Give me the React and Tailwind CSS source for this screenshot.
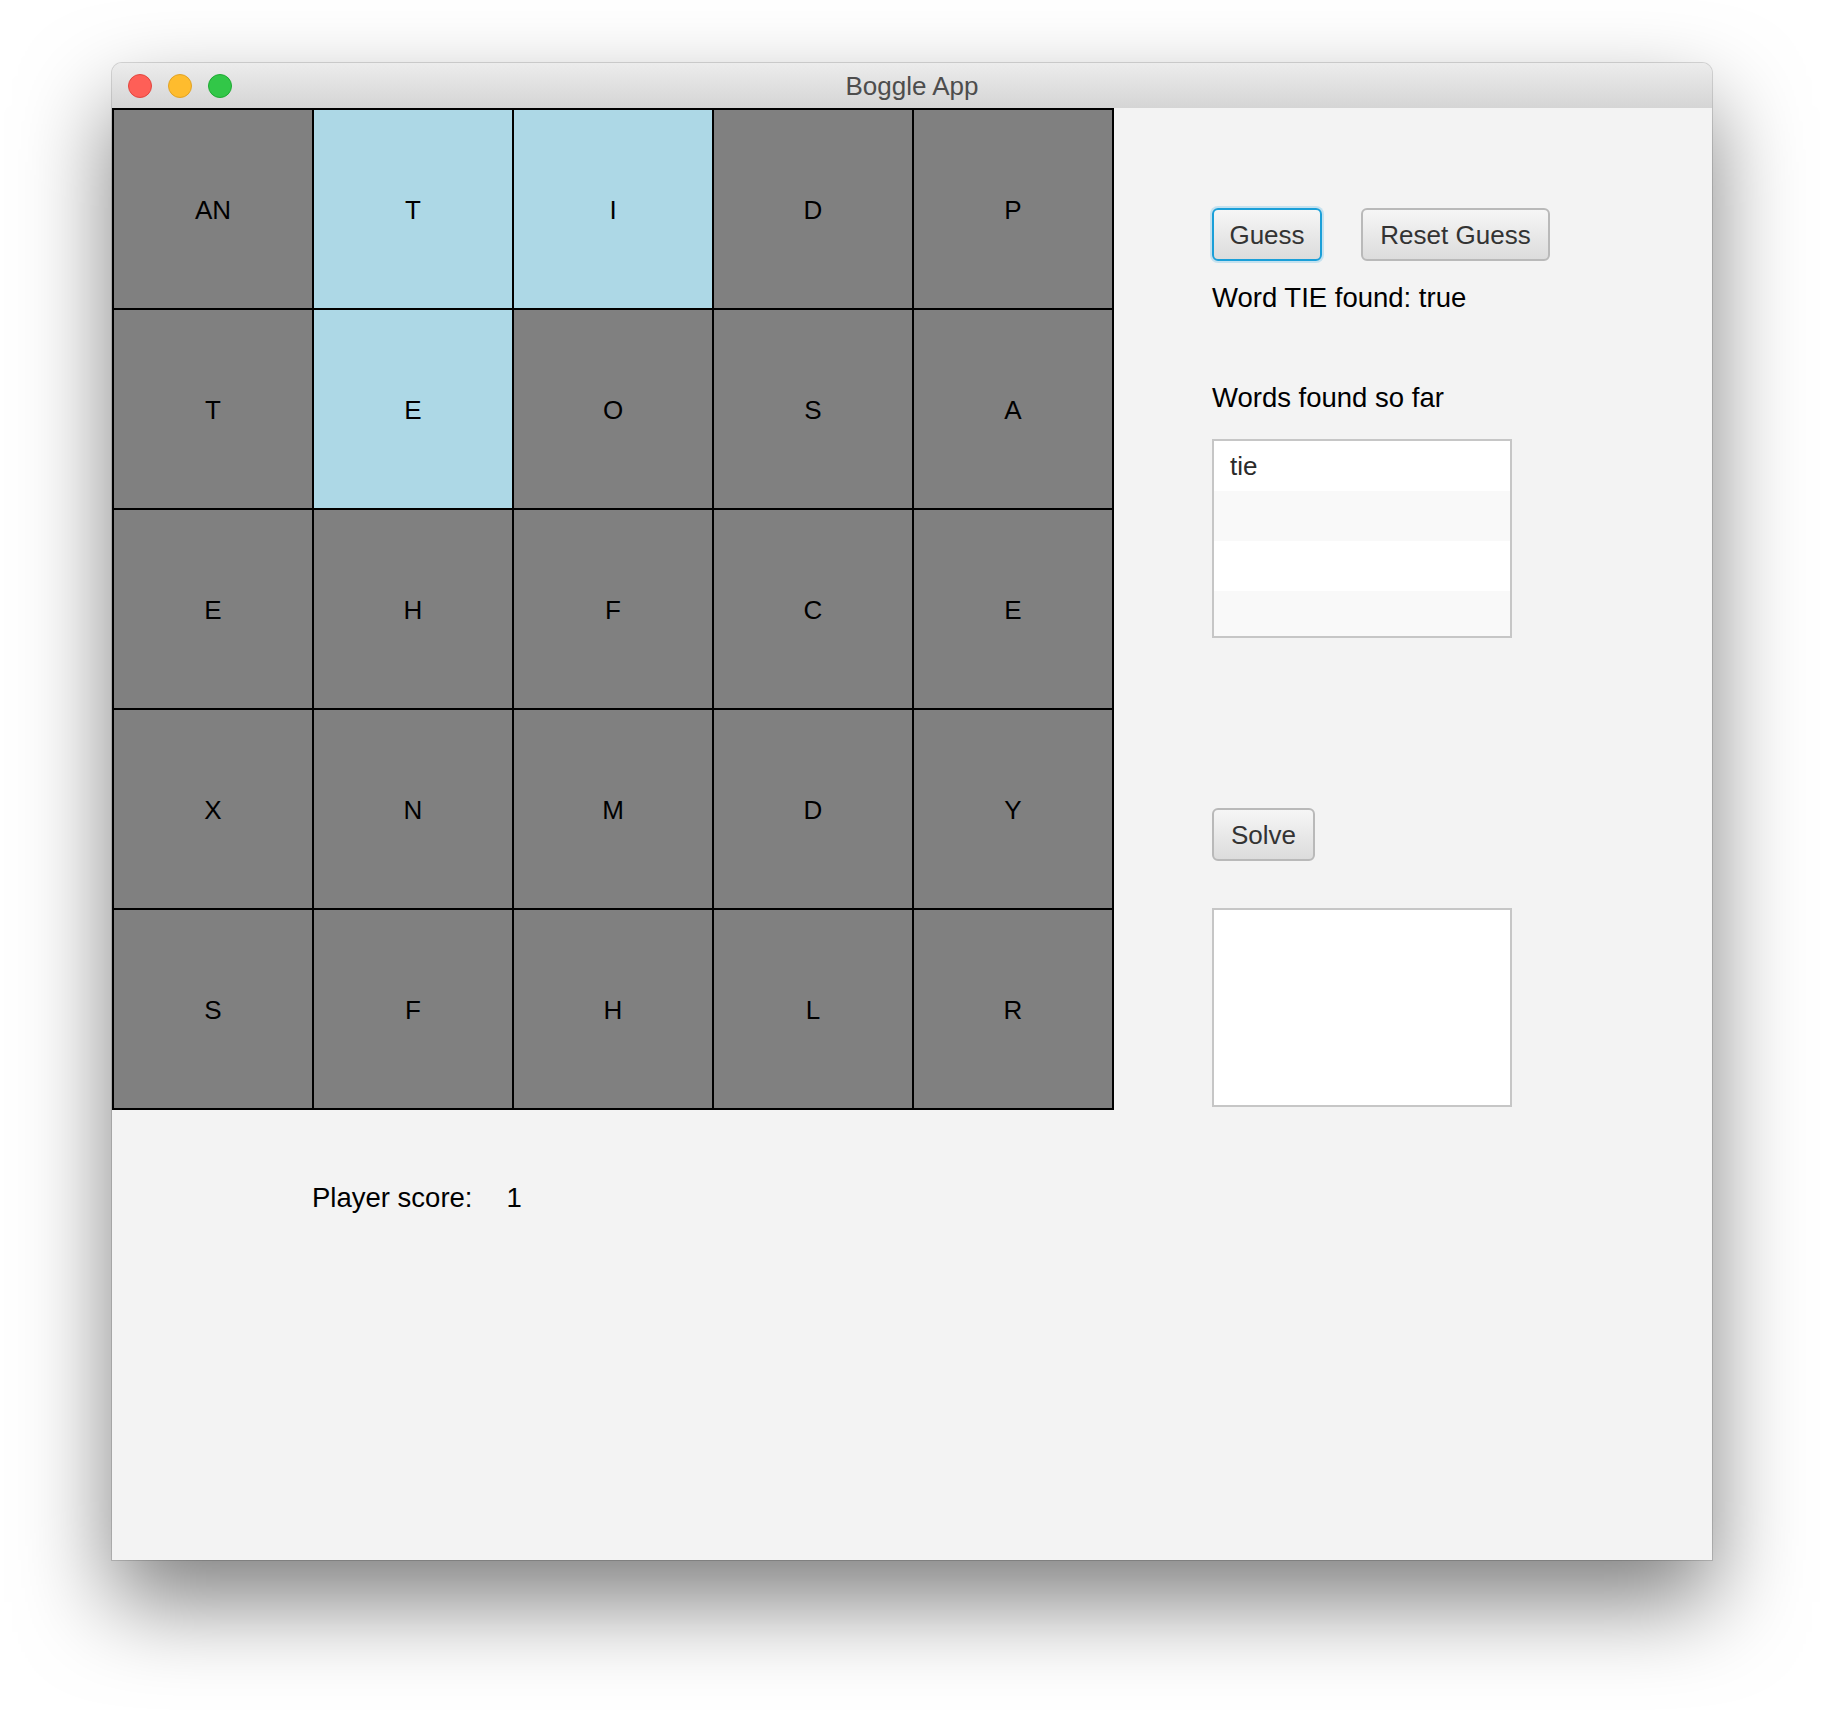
// Boggle App window: 5x5 letter board, guess controls and word lists.

const BOARD = [
  ["AN", "T", "I", "D", "P"],
  ["T", "E", "O", "S", "A"],
  ["E", "H", "F", "C", "E"],
  ["X", "N", "M", "D", "Y"],
  ["S", "F", "H", "L", "R"],
];

// cells that make up the current guess (TIE)
const SELECTED = ["0-1", "0-2", "1-1"];

const FOUND = ["tie"];

function TrafficLights() {
  return (
    <div className="flex items-center gap-[16px] pl-[16px]">
      <span className="h-[24px] w-[24px] rounded-full border border-[#e2463f] bg-[#fe5f57]" />
      <span className="h-[24px] w-[24px] rounded-full border border-[#e1a325] bg-[#febc2e]" />
      <span className="h-[24px] w-[24px] rounded-full border border-[#1eaa33] bg-[#32c748]" />
    </div>
  );
}

function Button({ children, focused = false, className = "" }) {
  return (
    <button
      className={
        "h-[53px] rounded-[6px] border-2 bg-gradient-to-b from-[#f6f6f6] to-[#dcdcdc] text-[26px] leading-none text-[#333] " +
        (focused
          ? "border-[#1a9fd8] shadow-[0_0_0_2px_rgba(140,205,235,0.45)] "
          : "border-[#b9b9b9] ") +
        className
      }
    >
      {children}
    </button>
  );
}

function WordList({ words = [] }) {
  const rows = [0, 1, 2, 3];
  return (
    <div className="flex h-[199px] w-[300px] flex-col overflow-hidden border-2 border-[#c6c6c6] bg-white">
      {rows.map((i) => (
        <div
          key={i}
          className={
            "flex h-[50px] shrink-0 items-center pl-[16px] text-[26px] text-[#2b2b2b] " +
            (i % 2 === 1 ? "bg-[#f9f9f9]" : "bg-white")
          }
        >
          {words[i] || ""}
        </div>
      ))}
    </div>
  );
}

export default function App() {
  return (
    <div
      className="h-[1720px] w-[1824px] bg-white pl-[112px] pt-[63px]"
      style={{ fontFamily: '"Liberation Sans", Arial, sans-serif' }}
    >
      <div className="flex h-[1497px] w-[1600px] flex-col overflow-hidden rounded-t-[10px] bg-[#f3f3f3] shadow-[0_0_0_1px_rgba(0,0,0,0.14),0_42px_90px_rgba(0,0,0,0.5)]">
        {/* title bar */}
        <div className="grid h-[45px] shrink-0 grid-cols-[1fr_auto_1fr] items-center bg-gradient-to-b from-[#ececec] to-[#d5d5d5]">
          <TrafficLights />
          <div className="pt-[2px] text-[26px] text-[#4d4d4d]">Boggle App</div>
          <div />
        </div>

        <div className="flex flex-1">
          {/* board + score */}
          <div className="flex flex-col">
            <div className="grid h-[1002px] w-[1002px] grid-cols-5 grid-rows-5 gap-[2px] bg-black p-[2px]">
              {BOARD.map((row, r) =>
                row.map((letter, c) => (
                  <div
                    key={`${r}-${c}`}
                    className={
                      "flex items-center justify-center pt-[2px] text-[26px] text-black " +
                      (SELECTED.includes(`${r}-${c}`) ? "bg-[#add8e6]" : "bg-[#808080]")
                    }
                  >
                    {letter}
                  </div>
                ))
              )}
            </div>

            <div className="mt-[72px] flex pl-[200px] text-[27.5px] leading-[32px] text-black">
              <span>Player score:</span>
              <span className="ml-[34px]">1</span>
            </div>
          </div>

          {/* controls */}
          <div className="ml-[98px] flex flex-col items-start pt-[100px]">
            <div className="flex items-center">
              <Button focused className="w-[110px]">Guess</Button>
              <Button className="ml-[39px] w-[189px]">Reset Guess</Button>
            </div>

            <div className="mt-[21px] text-[27.5px] leading-[32px] text-black">Word TIE found: true</div>

            <div className="mt-[68px] text-[27.5px] leading-[32px] text-black">Words found so far</div>

            <div className="mt-[25px]">
              <WordList words={FOUND} />
            </div>

            <Button className="mt-[170px] w-[103px]">Solve</Button>

            <div className="mt-[47px] h-[199px] w-[300px] border-2 border-[#c6c6c6] bg-white" />
          </div>
        </div>
      </div>
    </div>
  );
}
